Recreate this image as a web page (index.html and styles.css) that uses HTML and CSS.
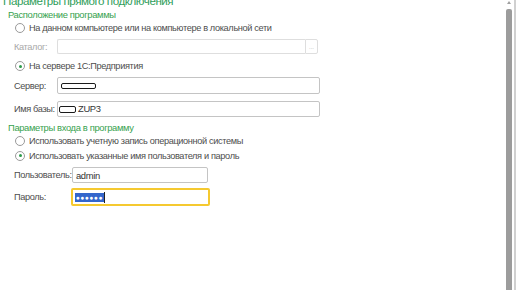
FILE: index.html
```html
<!DOCTYPE html>
<html lang="ru">
<head>
    <meta charset="UTF-8">
    <meta name="viewport" content="width=device-width, initial-scale=1.0">
    <title>Параметры прямого подключения</title>
    <link rel="stylesheet" href="styles.css">
</head>
<body>
    <div class="window">
        <div class="form">
            <div class="title">Параметры прямого подключения</div>

            <div class="group-title row-h1">Расположение программы</div>
            <div class="radio-row row-r1"><span class="radio"></span>На данном компьютере или на компьютере в локальной сети</div>
            <div class="field-row row-catalog disabled">
                <span class="label label-short">Каталог:</span>
                <div class="input input-catalog"></div>
                <div class="select-btn">...</div>
            </div>
            <div class="radio-row row-r2"><span class="radio checked"></span>На сервере 1С:Предприятия</div>
            <div class="field-row row-server">
                <span class="label label-short">Сервер:</span>
                <div class="input input-wide"><span class="redact redact-server"></span></div>
            </div>
            <div class="field-row row-base">
                <span class="label label-short">Имя базы:</span>
                <div class="input input-wide input-base"><span class="redact redact-base"></span>ZUP3</div>
            </div>

            <div class="group-title row-h2">Параметры входа в программу</div>
            <div class="radio-row row-r3"><span class="radio"></span>Использовать учетную запись операционной системы</div>
            <div class="radio-row row-r4"><span class="radio checked"></span>Использовать указанные имя пользователя и пароль</div>
            <div class="field-row row-user">
                <span class="label label-long">Пользователь:</span>
                <div class="input input-user">admin</div>
            </div>
            <div class="field-row row-pass">
                <span class="label label-long">Пароль:</span>
                <div class="input input-pass focused"><span class="selection">&#9679;&#9679;&#9679;&#9679;&#9679;&#9679;</span><span class="caret"></span></div>
            </div>
        </div>
        <div class="scrollbar">
            <div class="scroll-track">
                <div class="scroll-arrow"></div>
                <div class="scroll-thumb"></div>
            </div>
            <div class="scroll-edge"></div>
        </div>
    </div>
</body>
</html>
```

FILE: styles.css
```css
body {
    margin: 0;
    background-color: #ffffff;
    font-family: 'Liberation Sans', Arial, sans-serif;
    font-size: 9.2px;
    letter-spacing: -0.35px;
    color: #4d4d4d;
    overflow: hidden;
}
.window {
    display: flex;
    height: 290px;
    width: 516px;
    overflow: hidden;
}
.form {
    flex: 1;
    display: flex;
    flex-direction: column;
}
.title {
    height: 16px;
    margin-top: -8px;
    padding-left: 3px;
    line-height: 17px;
    font-size: 11.6px;
    letter-spacing: -0.45px;
    color: #2f9e5a;
    white-space: nowrap;
}
.group-title {
    display: flex;
    align-items: center;
    padding-left: 8px;
    font-size: 9.4px;
    color: #37a24e;
}
.row-h1 {
    height: 13px;
}
.row-h2 {
    height: 14px;
}
.radio-row {
    display: flex;
    align-items: center;
    padding-left: 15px;
    white-space: nowrap;
}
.row-r1 {
    height: 14px;
}
.row-r2 {
    height: 16px;
}
.row-r3 {
    height: 13px;
}
.row-r4 {
    height: 17px;
}
.radio {
    width: 8px;
    height: 8px;
    border: 1px solid #9a9a9a;
    border-radius: 50%;
    margin-right: 4px;
    display: flex;
    align-items: center;
    justify-content: center;
    background: #ffffff;
}
.radio.checked::after {
    content: '';
    width: 3px;
    height: 3px;
    border-radius: 50%;
    background: #2c9a4a;
}
.field-row {
    display: flex;
    align-items: center;
    padding-left: 14px;
}
.row-catalog {
    height: 23px;
}
.row-server {
    height: 23px;
}
.row-base {
    height: 23px;
}
.row-user {
    height: 22px;
}
.row-pass {
    height: 22px;
}
.label {
    white-space: nowrap;
}
.label-short {
    width: 43px;
}
.label-long {
    width: 58px;
}
.disabled .label {
    color: #a8a8a8;
}
.input {
    box-sizing: border-box;
    border: 1px solid #c4c4c4;
    border-radius: 2px;
    background: #ffffff;
    display: flex;
    align-items: center;
    padding-left: 3px;
    color: #333333;
    font-size: 9.4px;
}
.input-catalog {
    width: 248px;
    height: 15px;
    border-color: #dedede;
    border-right: none;
    border-radius: 2px 0 0 2px;
}
.select-btn {
    box-sizing: border-box;
    width: 13px;
    height: 15px;
    border: 1px solid #dedede;
    border-radius: 0 2px 2px 0;
    color: #b0b0b0;
    font-size: 6px;
    display: flex;
    align-items: center;
    justify-content: center;
    letter-spacing: 0;
}
.input-wide {
    width: 263px;
    height: 17px;
}
.input-base {
    height: 16px;
    padding-left: 1px;
}
.redact {
    box-sizing: border-box;
    border: 1.5px solid #1a1a1a;
    border-radius: 2px;
    display: inline-block;
}
.redact-server {
    width: 35px;
    height: 6px;
}
.redact-base {
    width: 17px;
    height: 7px;
    margin-right: 2px;
    margin-top: 1px;
}
.input-user {
    width: 136px;
    height: 16px;
}
.input-pass {
    width: 139px;
    height: 18px;
    margin-left: -1px;
}
.input-pass.focused {
    border: 2px solid #f5c930;
    padding-left: 2px;
}
.selection {
    background: #3366cc;
    color: #ffffff;
    font-size: 6.5px;
    line-height: 9px;
    height: 9px;
    padding: 0 1px;
    letter-spacing: 0.6px;
    display: inline-flex;
    align-items: center;
}
.caret {
    width: 1px;
    height: 11px;
    background: #222222;
}
.scrollbar {
    width: 11px;
    display: flex;
}
.scroll-track {
    width: 8px;
    display: flex;
    flex-direction: column;
    align-items: center;
}
.scroll-arrow {
    width: 0;
    height: 0;
    border-left: 2px solid transparent;
    border-right: 2px solid transparent;
    border-bottom: 3px solid #a0a0a0;
    margin-top: 1px;
    margin-bottom: 5px;
}
.scroll-thumb {
    width: 6px;
    flex: 1;
    background: #9c9c9c;
    border-radius: 2px 2px 0 0;
}
.scroll-edge {
    width: 2px;
    margin-left: 1px;
    background: #d0d0d0;
}
```
